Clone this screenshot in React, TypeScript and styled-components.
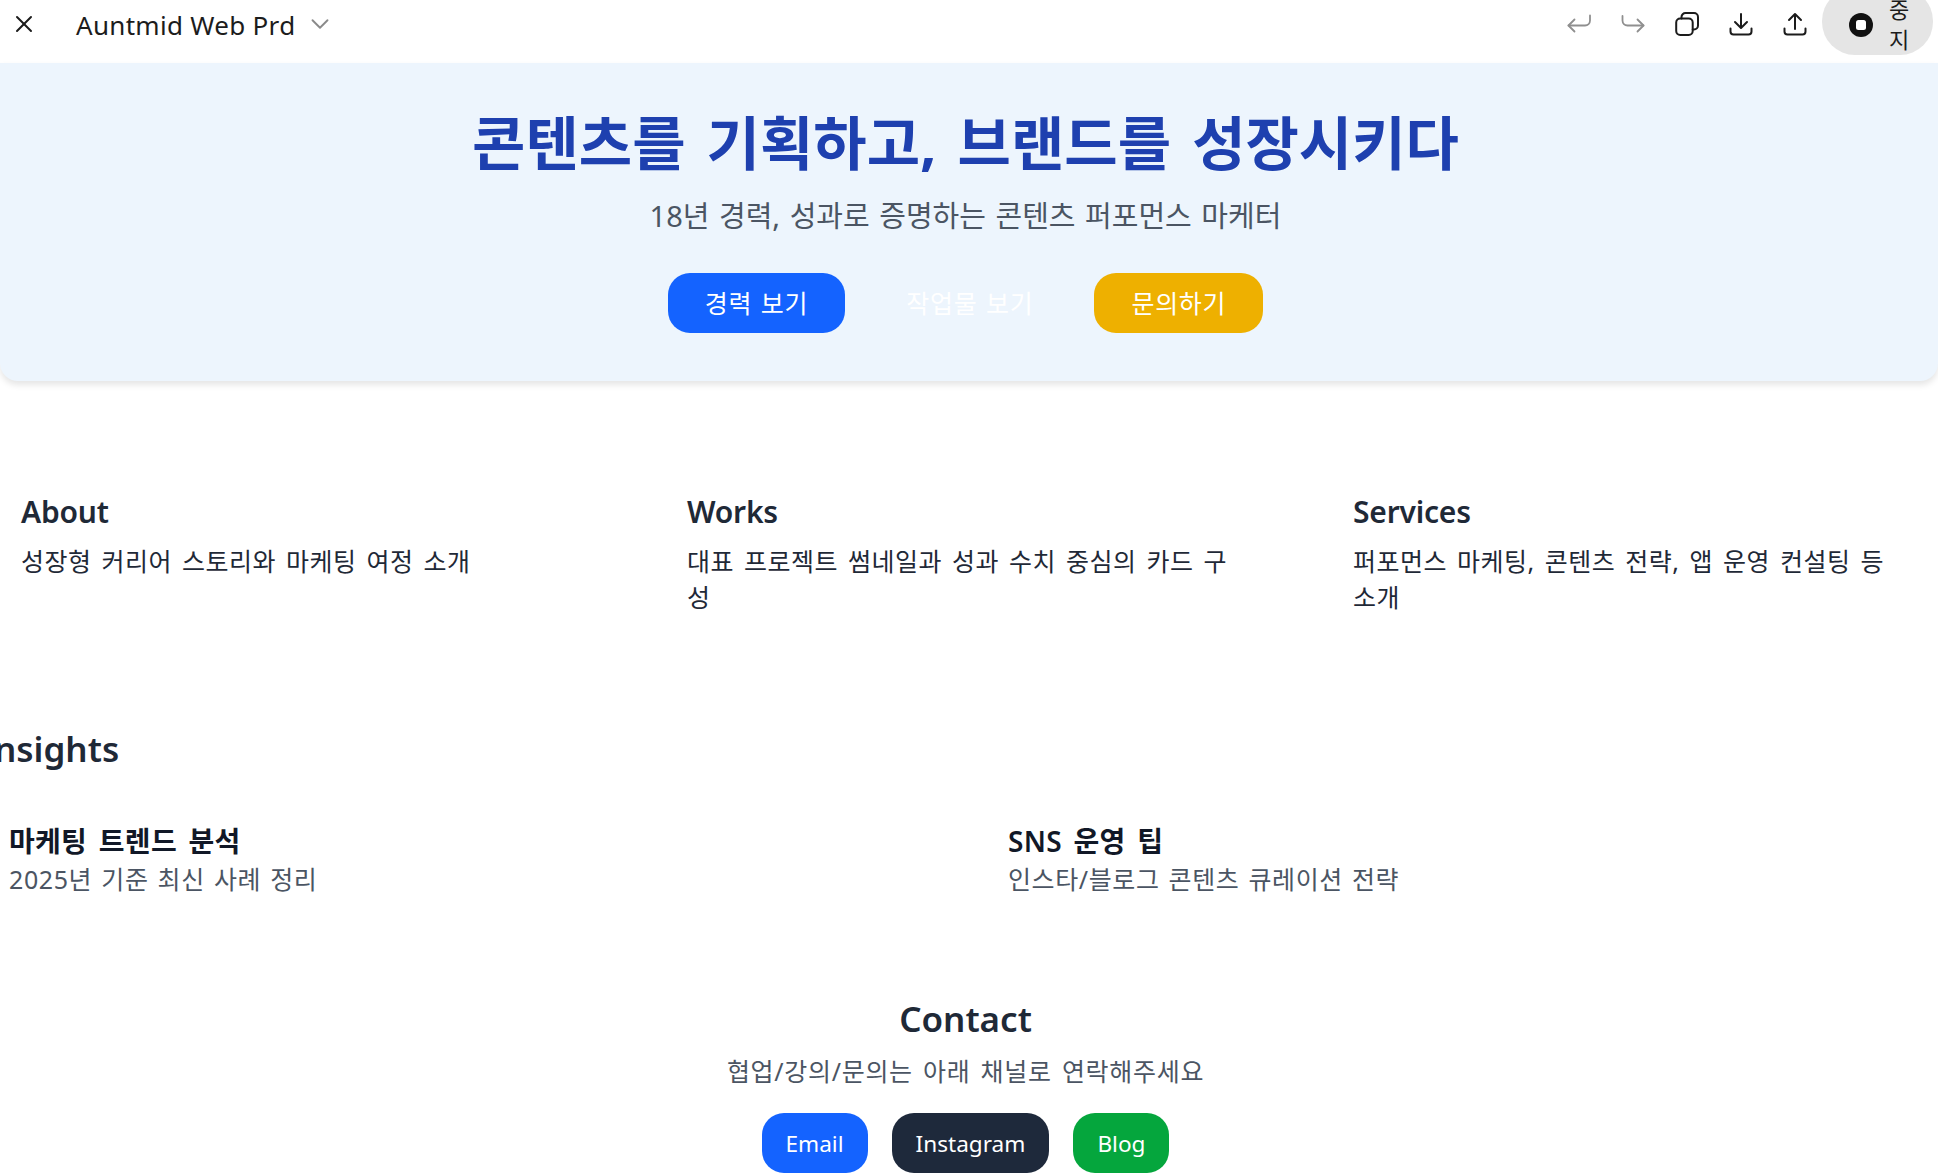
import styled, { createGlobalStyle } from 'styled-components';
import { X, ChevronDown } from 'lucide-react';

const GlobalStyle = createGlobalStyle`
  html, body {
    margin: 0;
    padding: 0;
    height: 100%;
    background: #fff;
    overflow: hidden;
  }
  body {
    font-family: "Noto Sans", "Noto Sans CJK KR", sans-serif;
    color: #1f2937;
  }
`;

const Shell = styled.div`
  width: 1938px;
  height: 1173px;
  display: flex;
  flex-direction: column;
  overflow: hidden;
`;

const TopBar = styled.header`
  height: 63px;
  flex: none;
  display: flex;
  align-items: center;
  padding: 0 5px 15px 10px;
  box-sizing: border-box;
`;

const TitleName = styled.span`
  margin: 2px 0 0 38px;
  font-size: 26px;
  letter-spacing: 0.3px;
  color: #1c1c1c;
`;

const Caret = styled(ChevronDown)`
  margin-left: 10px;
  color: #8a8a8a;
`;

const Tools = styled.div`
  margin-left: auto;
  display: flex;
  align-items: center;
  gap: 30px;
`;

const ToolIcon = styled.svg<{ $muted?: boolean }>`
  width: 24px;
  height: 24px;
  flex: none;
  fill: none;
  stroke: ${props => (props.$muted ? '#8f8f8f' : '#1c1c1c')};
  stroke-width: ${props => (props.$muted ? 1.8 : 2)};
  stroke-linecap: round;
  stroke-linejoin: round;
`;

const StopPill = styled.div`
  width: 111px;
  height: 67px;
  margin: -33px 0 -28px -15px;
  border-radius: 33px;
  background: #e5e5e5;
  display: flex;
  align-items: center;
  gap: 16px;
  padding-left: 27px;
  box-sizing: border-box;
  font-size: 22px;
  line-height: 30px;
  color: #1c1c1c;
`;

const StopIcon = styled.svg`
  flex: none;
  margin-top: 6px;
`;

const StopLabel = styled.span`
  width: 24px;
  margin-top: 4px;
`;

const Hero = styled.section`
  flex: none;
  height: 318px;
  padding-right: 7px;
  box-sizing: border-box;
  background: #edf5fd;
  border-radius: 0 0 18px 18px;
  box-shadow: 0 4px 6px rgba(0, 0, 0, 0.1);
  display: flex;
  flex-direction: column;
  align-items: center;
`;

const HeroTitle = styled.h1`
  margin: 44px 0 0;
  font-size: 58px;
  line-height: 72px;
  font-weight: 700;
  word-spacing: 6px;
  color: #1e40af;
`;

const HeroSub = styled.p`
  margin: 17px 0 0;
  font-size: 29px;
  line-height: 40px;
  word-spacing: 2px;
  color: #4b5563;
`;

const HeroActions = styled.div`
  margin-top: 37px;
  display: flex;
  gap: 24px;
`;

const Pill = styled.a<{ $bg?: string }>`
  height: 60px;
  padding: 0 24px;
  border-radius: 22px;
  display: flex;
  align-items: center;
  font-size: 22.6px;
  color: #fff;
  background: ${props => props.$bg || 'transparent'};
`;

const HeroPill = styled(Pill)`
  padding: 0 37px;
  font-size: 25px;
  line-height: 58px;
  letter-spacing: 0.7px;
  word-spacing: 1.5px;
`;

const Columns = styled.section`
  margin-top: 111px;
  padding: 0 21px;
  display: grid;
  grid-template-columns: repeat(3, 610px);
  column-gap: 56px;
`;

const ColumnTitle = styled.h3`
  margin: 0;
  font-size: 30px;
  line-height: 40px;
  font-weight: 600;
  letter-spacing: -0.2px;
  color: #1f2937;
`;

const ColumnText = styled.p`
  margin: 11px 0 0;
  max-width: 550px;
  font-size: 25px;
  line-height: 36px;
  letter-spacing: 0.5px;
  word-spacing: 3px;
  color: #1f2937;
`;

const InsightsHead = styled.h2`
  margin: 110px 0 0 -19px;
  font-size: 35px;
  line-height: 48px;
  font-weight: 600;
  color: #1f2937;
`;

const InsightRow = styled.div`
  margin-top: 49px;
  padding-left: 9px;
  display: grid;
  grid-template-columns: 999px 1fr;
`;

const InsightTitle = styled.h4`
  margin: 0;
  font-size: 28px;
  line-height: 38px;
  font-weight: 600;
  letter-spacing: 0.3px;
  word-spacing: 4px;
  color: #111827;
`;

const InsightText = styled.p`
  margin: 1px 0 0;
  font-size: 25px;
  line-height: 36px;
  letter-spacing: 0.6px;
  word-spacing: 2px;
  color: #4b5563;
`;

const Contact = styled.section`
  margin-top: 98px;
  padding-right: 7px;
  display: flex;
  flex-direction: column;
  align-items: center;
`;

const ContactTitle = styled.h2`
  margin: 0;
  font-size: 35px;
  line-height: 48px;
  font-weight: 600;
  color: #1f2937;
`;

const ContactText = styled.p`
  margin: 10px 0 0;
  font-size: 25px;
  line-height: 36px;
  letter-spacing: 0.7px;
  word-spacing: 3px;
  color: #4b5563;
`;

const ContactActions = styled.div`
  margin-top: 24px;
  display: flex;
  gap: 24px;
`;

const features = [
  { title: 'About', text: '성장형 커리어 스토리와 마케팅 여정 소개' },
  { title: 'Works', text: '대표 프로젝트 썸네일과 성과 수치 중심의 카드 구성' },
  { title: 'Services', text: '퍼포먼스 마케팅, 콘텐츠 전략, 앱 운영 컨설팅 등 소개' },
];

const insights = [
  { title: '마케팅 트렌드 분석', text: '2025년 기준 최신 사례 정리' },
  { title: 'SNS 운영 팁', text: '인스타/블로그 콘텐츠 큐레이션 전략' },
];

export default function App() {
  return (
    <Shell>
      <GlobalStyle />
      <TopBar>
        <X size={28} strokeWidth={1.7} color="#1c1c1c" />
        <TitleName>Auntmid Web Prd</TitleName>
        <Caret size={30} strokeWidth={1.5} />
        <Tools>
          <ToolIcon $muted viewBox="0 0 24 24">
            <path d="M23 3.5v5a5 5 0 0 1-5 5H1.5" />
            <path d="M7.5 7.5l-6 6 6 6" />
          </ToolIcon>
          <ToolIcon $muted viewBox="0 0 24 24">
            <path d="M1.5 4v4.5a5 5 0 0 0 5 5h16" />
            <path d="M16.5 7.5l6 6-6 6" />
          </ToolIcon>
          <ToolIcon viewBox="0 0 24 24">
            <rect x="1.2" y="6.5" width="16.5" height="16.5" rx="4" />
            <path d="M6.5 6.5V5a4 4 0 0 1 4-4H19a4 4 0 0 1 4 4v8.5a4 4 0 0 1-4 4h-1.3" />
          </ToolIcon>
          <ToolIcon viewBox="0 0 24 24">
            <path d="M12 2v13" />
            <path d="M6 10l6 6 6-6" />
            <path d="M1.5 16.5v3a3 3 0 0 0 3 3h15a3 3 0 0 0 3-3v-3" />
          </ToolIcon>
          <ToolIcon viewBox="0 0 24 24">
            <path d="M12 17V3" />
            <path d="M6 8l6-6 6 6" />
            <path d="M1.5 16.5v3a3 3 0 0 0 3 3h15a3 3 0 0 0 3-3v-3" />
          </ToolIcon>
          <StopPill>
            <StopIcon width="24" height="24" viewBox="0 0 24 24">
              <circle cx="12" cy="12" r="12" fill="#111" />
              <rect x="7" y="7" width="10" height="10" rx="2.5" fill="#fff" />
            </StopIcon>
            <StopLabel>중지</StopLabel>
          </StopPill>
        </Tools>
      </TopBar>

      <Hero>
        <HeroTitle>콘텐츠를 기획하고, 브랜드를 성장시키다</HeroTitle>
        <HeroSub>18년 경력, 성과로 증명하는 콘텐츠 퍼포먼스 마케터</HeroSub>
        <HeroActions>
          <HeroPill $bg="#1463ff">경력 보기</HeroPill>
          <HeroPill>작업물 보기</HeroPill>
          <HeroPill $bg="#eeb000">문의하기</HeroPill>
        </HeroActions>
      </Hero>

      <Columns>
        {features.map(item => (
          <div key={item.title}>
            <ColumnTitle>{item.title}</ColumnTitle>
            <ColumnText>{item.text}</ColumnText>
          </div>
        ))}
      </Columns>

      <InsightsHead>Insights</InsightsHead>
      <InsightRow>
        {insights.map(item => (
          <div key={item.title}>
            <InsightTitle>{item.title}</InsightTitle>
            <InsightText>{item.text}</InsightText>
          </div>
        ))}
      </InsightRow>

      <Contact>
        <ContactTitle>Contact</ContactTitle>
        <ContactText>협업/강의/문의는 아래 채널로 연락해주세요</ContactText>
        <ContactActions>
          <Pill $bg="#1463ff">Email</Pill>
          <Pill $bg="#1e293b">Instagram</Pill>
          <Pill $bg="#05a63d">Blog</Pill>
        </ContactActions>
      </Contact>
    </Shell>
  );
}
